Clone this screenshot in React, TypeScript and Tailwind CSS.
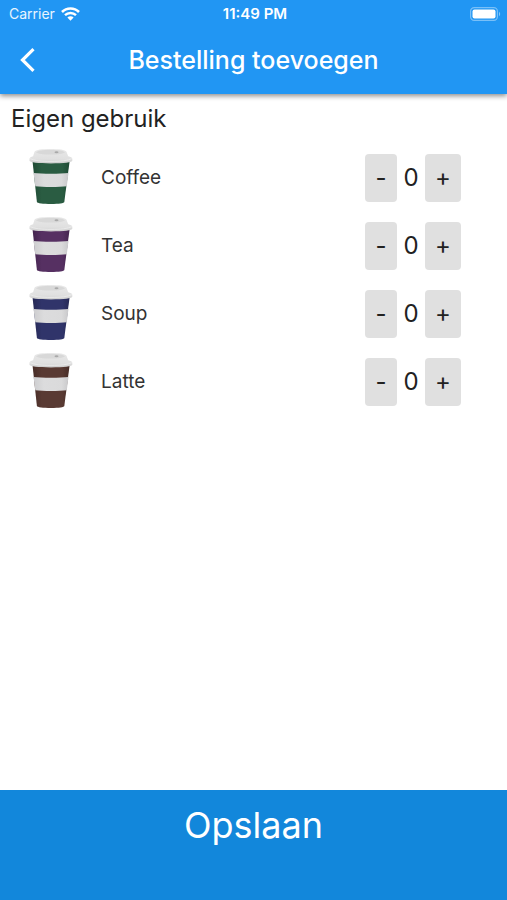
import { useState } from "react";

type Product = {
  name: string;
  color: string;
  shade: string;
};

type ProductRowProps = {
  product: Product;
  count: number;
  onChange: (count: number) => void;
};

const products: Product[] = [
  { name: "Coffee", color: "#2a5c42", shade: "#1f4a34" },
  { name: "Tea", color: "#563062", shade: "#43244e" },
  { name: "Soup", color: "#30346a", shade: "#252853" },
  { name: "Latte", color: "#593a33", shade: "#462c26" },
];

const WifiIcon = () => (
  <svg width="19" height="14" viewBox="0 0 19 14" fill="none" aria-hidden="true">
    <path d="M1 5a12 12 0 0 1 17 0" stroke="white" strokeWidth="2.6" />
    <path d="M4 8.200a7.800 7.800 0 0 1 11 0" stroke="white" strokeWidth="2.4" />
    <path d="M9.500 13.800 6.400 10.600a4.400 4.400 0 0 1 6.200 0z" fill="white" />
  </svg>
);

const BatteryIcon = () => (
  <svg width="31" height="14" viewBox="0 0 31 14" fill="none" aria-hidden="true">
    <rect x="0.6" y="0.6" width="26.8" height="12.8" rx="3.6" stroke="white" strokeOpacity="0.4" strokeWidth="1.2" />
    <rect x="2.5" y="2.5" width="23" height="9" rx="2" fill="white" />
    <path d="M29 4.800c1.600.7 1.600 3.700 0 4.400z" fill="white" fillOpacity="0.45" />
  </svg>
);

const Cup = ({ name, color, shade }: Product) => (
  <svg width="44" height="58" viewBox="0 1 44 58" role="img" aria-label={name}>
    <defs>
      <linearGradient id={`cup-${name}`} x1="0" x2="1">
        <stop offset="0" stopColor={shade} />
        <stop offset="0.25" stopColor={color} />
        <stop offset="0.8" stopColor={color} />
        <stop offset="1" stopColor={shade} />
      </linearGradient>
      <linearGradient id={`sleeve-${name}`} x1="0" x2="1">
        <stop offset="0" stopColor="#cdcdcf" />
        <stop offset="0.3" stopColor="#dcdcdd" />
        <stop offset="0.8" stopColor="#dadadb" />
        <stop offset="1" stopColor="#c9c9cb" />
      </linearGradient>
      <linearGradient id={`lid-${name}`} x1="0" x2="0" y1="0" y2="1">
        <stop offset="0" stopColor="#e8e8e8" />
        <stop offset="0.7" stopColor="#e0e0e0" />
        <stop offset="1" stopColor="#cccccc" />
      </linearGradient>
    </defs>
    <path d="M3.300 11h37.600L35.300 54c-.3 1.200-5.300 2-13.300 2S8.200 55.200 7.900 54z" fill={`url(#cup-${name})`} />
    <path d="M4.500 25c8 .9 27.200.9 35 0L37.800 38.200c-8 1.100-23.500 1.100-31.500 0z" fill={`url(#sleeve-${name})`} />
    <path
      d="M5.500 3.800C7 1.600 13 1 21.500 1S36 1.600 37.500 3.800l1.700 4.400c2.500.6 4.100 1.400 4.100 2.600v2c0 1.600-8.500 2.600-21.300 2.600S.500 14.400.500 12.800v-2c0-1.200 1.500-2 3.600-2.600z"
      fill={`url(#lid-${name})`}
    />
    <path d="M7 4.200C9 2.500 14 1.900 21.500 1.900S34 2.500 36 4.200C34 5.800 29 6.500 21.500 6.500S9 5.800 7 4.200z" fill="#d8d8d8" />
    <path d="M1.200 10.600c4 2 11 2.800 20.800 2.800s17-.8 20.800-2.800" stroke="#eeeeee" strokeWidth="0.8" fill="none" />
    <ellipse cx="27.500" cy="4.300" rx="2" ry="1" fill="#a9a9a9" />
  </svg>
);

const ProductRow = ({ product, count, onChange }: ProductRowProps) => {
  return (
    <li className="flex h-[68px] items-center pr-[46px] pl-[29px]">
      <Cup {...product} />
      <span className="ml-7 flex-1 text-[19px] leading-6 text-[#333333]">{product.name}</span>
      <button
        type="button"
        aria-label={`Minder ${product.name}`}
        onClick={() => onChange(Math.max(0, count - 1))}
        className="h-12 w-8 rounded bg-[#e0e0e0] text-2xl"
      >
        -
      </button>
      <span className="w-7 text-center text-2xl">{count}</span>
      <button
        type="button"
        aria-label={`Meer ${product.name}`}
        onClick={() => onChange(count + 1)}
        className="h-12 w-9 rounded bg-[#e0e0e0] text-2xl"
      >
        +
      </button>
    </li>
  );
};

const App = () => {
  const [counts, setCounts] = useState<number[]>(products.map(() => 0));

  const handleChange = (index: number, count: number) => {
    setCounts(counts.map((current, i) => (i === index ? count : current)));
  };

  return (
    <div className="flex min-h-screen flex-col bg-white font-['Inter',sans-serif] text-[#222222]">
      <header className="bg-[#2196f3] text-white shadow-[0_2px_5px_rgba(0,0,0,0.45)]">
        <div className="grid h-7 grid-cols-3 items-center pr-[6px] pl-[9px] text-sm">
          <div className="flex items-center gap-[6px] text-white/90">
            <span>Carrier</span>
            <WifiIcon />
          </div>
          <span className="text-center text-[15px] font-semibold">11:49 PM</span>
          <div className="flex justify-end">
            <BatteryIcon />
          </div>
        </div>
        <div className="grid h-[66px] grid-cols-[56px_1fr_56px] items-center pb-[2px]">
          <button type="button" aria-label="Terug" className="flex h-12 items-center pl-5">
            <svg width="16" height="24" viewBox="0 0 16 24" fill="none" aria-hidden="true">
              <path d="M13.500 1.200 2.500 12l11 10.800" stroke="white" strokeWidth="3.200" />
            </svg>
          </button>
          <h1 className="text-center text-[25px] leading-8 font-medium">Bestelling toevoegen</h1>
        </div>
      </header>

      <main className="flex-1">
        <h2 className="px-[11px] py-[9px] text-2xl">Eigen gebruik</h2>
        <ul>
          {products.map((product, index) => (
            <ProductRow
              key={product.name}
              product={product}
              count={counts[index]}
              onChange={(count) => handleChange(index, count)}
            />
          ))}
        </ul>
      </main>

      <button
        type="button"
        className="flex w-full justify-center bg-[#1287db] pt-[11px] pb-[51px] text-4xl leading-12 text-white"
      >
        Opslaan
      </button>
    </div>
  );
};

export default App;
